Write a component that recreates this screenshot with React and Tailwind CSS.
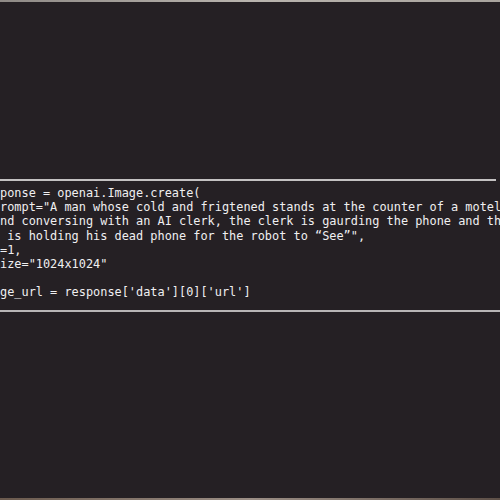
export default function App() {
  const lines = [
    "ponse = openai.Image.create(",
    'rompt="A man whose cold and frigtened stands at the counter of a motel',
    "nd conversing with an AI clerk, the clerk is gaurding the phone and th",
    " is holding his dead phone for the robot to \u201cSee\u201d\",",
    "=1,",
    'ize="1024x1024"',
    "",
    "ge_url = response['data'][0]['url']",
  ];
  return (
    <div className="relative w-[500px] h-[500px] overflow-hidden bg-[#252024] flex flex-col">
      <div className="h-[2px] w-full bg-gradient-to-r from-[#8f8a86] via-[#b9b4ae] to-[#a9a49e]" />
      <div className="h-[177px]" />
      <div className="flex flex-col">
        <div className="h-[2px] w-[496px] bg-[#c4c1c2]" />
        <div
          className="pt-[5px] pb-[10px] pl-[0px] text-[#f0eff1] whitespace-pre text-[11.9px] leading-[14.2px]"
          style={{ fontFamily: '"DejaVu Sans Mono", monospace' }}
        >
          {lines.map((l, i) => (
            <div key={i} className="h-[14.2px]">{l}</div>
          ))}
        </div>
        <div className="h-[2px] w-full bg-[#b8b5b6]" />
      </div>
      <div className="flex-1" />
      <div className="h-[2px] w-full bg-gradient-to-r from-[#6b5a4e] via-[#9c8f86] to-[#5e5048]" />
    </div>
  );
}
